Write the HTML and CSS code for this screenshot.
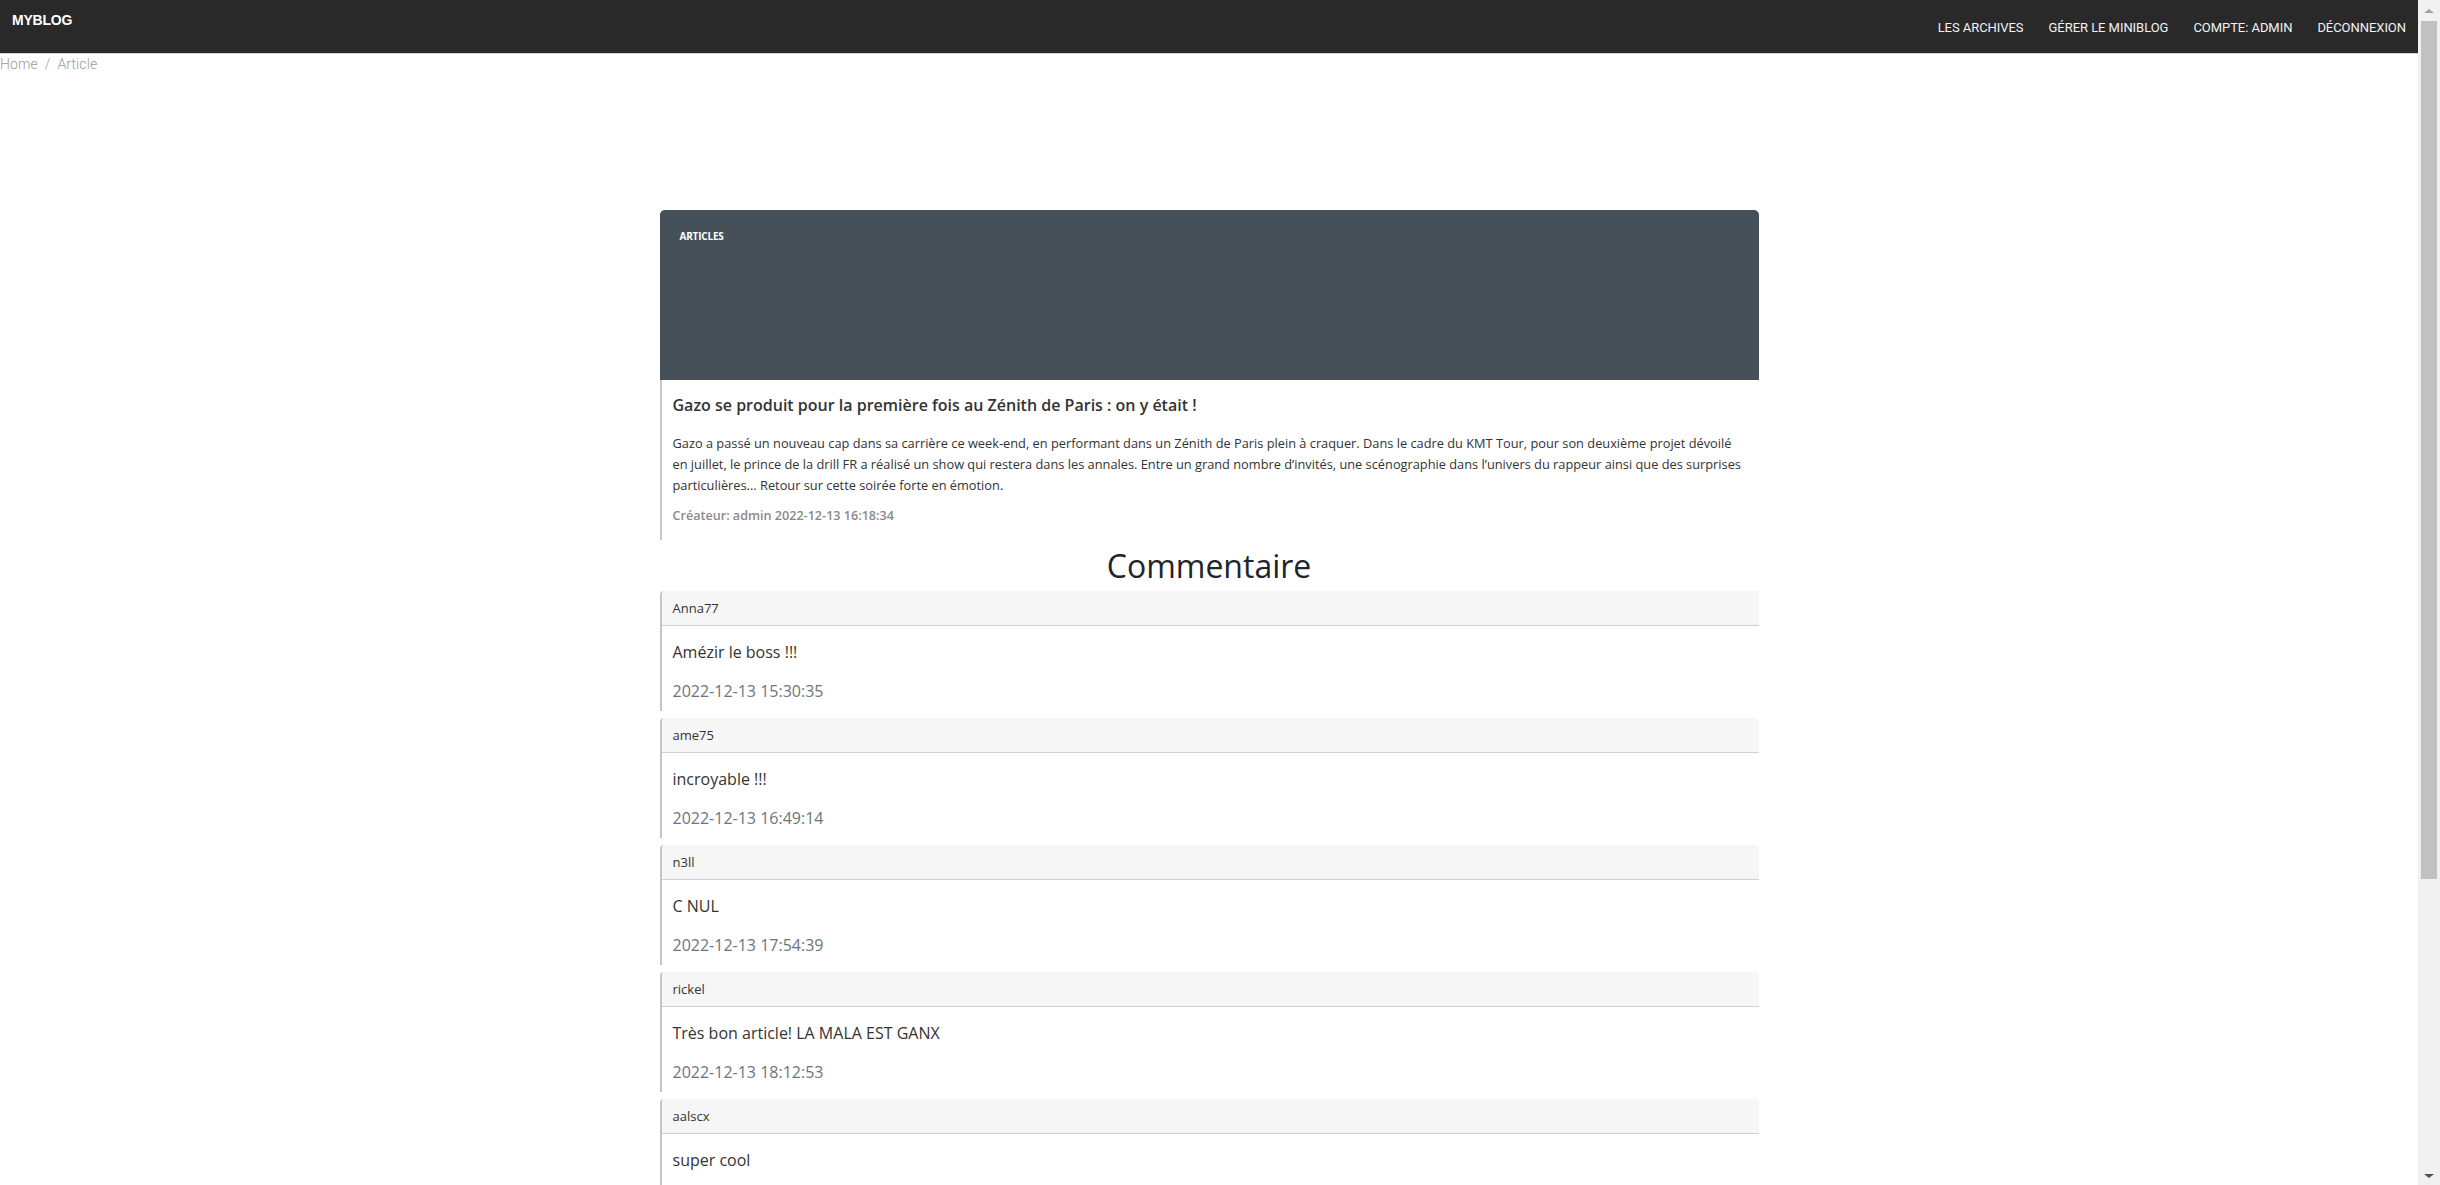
FILE: index.html
```html
<!DOCTYPE html>
<html lang="fr">
<head>
<meta charset="utf-8">
<title>MyBlog - Article</title>
<link rel="stylesheet" href="styles.css">
</head>
<body>
<div class="page">
  <nav class="topbar">
    <a class="brand" href="#">MYBLOG</a>
    <ul class="menu">
      <li><a href="#">LES ARCHIVES</a></li>
      <li><a href="#">GÉRER LE MINIBLOG</a></li>
      <li><a href="#">COMPTE: ADMIN</a></li>
      <li><a href="#">DÉCONNEXION</a></li>
    </ul>
  </nav>
  <div class="crumbs"><a href="#">Home</a><span class="sep">/</span><span class="here">Article</span></div>

  <main class="wrap">
    <article class="card">
      <header class="card-head"><span class="tag">ARTICLES</span></header>
      <div class="card-body">
        <h2 class="title">Gazo se produit pour la première fois au Zénith de Paris : on y était !</h2>
        <p class="text">Gazo a passé un nouveau cap dans sa carrière ce week-end, en performant dans un Zénith de Paris plein à craquer. Dans le cadre du KMT Tour, pour son deuxième projet dévoilé<br>en juillet, le prince de la drill FR a réalisé un show qui restera dans les annales. Entre un grand nombre d’invités, une scénographie dans l’univers du rappeur ainsi que des surprises particulières... Retour sur cette soirée forte en émotion.</p>
        <p class="meta">Créateur: admin 2022-12-13 16:18:34</p>
      </div>
    </article>

    <h1 class="section-title">Commentaire</h1>

    <section class="comments">
      <div class="comment">
        <div class="c-head">Anna77</div>
        <div class="c-body"><p class="c-text">Amézir le boss !!!</p><p class="c-date">2022-12-13 15:30:35</p></div>
      </div>
      <div class="comment">
        <div class="c-head">ame75</div>
        <div class="c-body"><p class="c-text">incroyable !!!</p><p class="c-date">2022-12-13 16:49:14</p></div>
      </div>
      <div class="comment">
        <div class="c-head">n3ll</div>
        <div class="c-body"><p class="c-text">C NUL</p><p class="c-date">2022-12-13 17:54:39</p></div>
      </div>
      <div class="comment">
        <div class="c-head">rickel</div>
        <div class="c-body"><p class="c-text">Très bon article! LA MALA EST GANX</p><p class="c-date">2022-12-13 18:12:53</p></div>
      </div>
      <div class="comment">
        <div class="c-head">aalscx</div>
        <div class="c-body"><p class="c-text">super cool</p><p class="c-date">2022-12-13 18:40:07</p></div>
      </div>
    </section>
  </main>
</div>
<div class="scrollbar" aria-hidden="true">
  <span class="sb-up"></span>
  <span class="sb-thumb"></span>
  <span class="sb-track"></span>
  <span class="sb-down"></span>
</div>
</body>
</html>
```
FILE: styles.css
```css
html, body { margin: 0; padding: 0; }
body {
  background: #fff;
  font-family: "Open Sans", "Noto Sans", sans-serif;
  color: #333;
  display: flex;
  align-items: flex-start;
}
a { text-decoration: none; color: inherit; }

.page { flex: 1; min-width: 0; }

/* scrollbar drawn as in the capture */
.scrollbar {
  flex: none;
  width: 22px;
  height: 100vh;
  position: sticky;
  top: 0;
  background: #f1f1f1;
  display: flex;
  flex-direction: column;
  align-items: center;
}
.sb-up {
  margin-top: 9px;
  width: 0; height: 0;
  border-left: 5px solid transparent;
  border-right: 5px solid transparent;
  border-bottom: 4px solid #a3a3a3;
}
.sb-thumb {
  margin-top: 8px;
  width: 16px;
  height: 858px;
  background: #c1c1c1;
}
.sb-track { flex: 1; }
.sb-down {
  margin-bottom: 7px;
  width: 0; height: 0;
  border-left: 5px solid transparent;
  border-right: 5px solid transparent;
  border-top: 4px solid #505050;
}

.topbar {
  height: 53px;
  background: #292929;
  border-bottom: 1px solid #d6d6d6;
  display: flex;
  align-items: center;
  justify-content: space-between;
  padding: 0 12px;
}
.brand {
  font-family: "Liberation Sans", Arial, sans-serif;
  font-weight: 900;
  font-size: 14px;
  line-height: 16px;
  color: #fff;
  letter-spacing: -0.2px;
  align-self: flex-start;
  margin-top: 12px;
}
.menu {
  list-style: none;
  margin: 0 0 2px;
  padding: 0;
  display: flex;
  gap: 25px;
  align-items: center;
}
.menu a {
  font-family: Roboto, "Liberation Sans", sans-serif;
  font-size: 13px;
  color: #f2f2f2;
  letter-spacing: -0.05px;
}

.crumbs {
  font-family: Roboto, "Liberation Sans", sans-serif;
  font-size: 14px;
  color: #9a9a9a;
  height: 20px;
  line-height: 20px;
  font-weight: 300;
  letter-spacing: 0.1px;
}
.crumbs .sep { margin: 0 7px; }

.wrap {
  width: 1099px;
  margin: 136px auto 0;
}

.card {
  border-left: 2px solid #c8c8c8;
  border-radius: 5px 5px 0 0;
}
.card-head {
  height: 170px;
  background: #465059;
  border-radius: 5px 5px 0 0;
  margin-left: -2px;
  padding: 20px 0 0 20px;
  box-sizing: border-box;
}
.tag {
  display: block;
  color: #fff;
  font-size: 10px;
  font-weight: 700;
  letter-spacing: -0.2px;
  line-height: 12px;
}
.card-body {
  padding: 14px 6px 14px 11px;
}
.title {
  margin: 0 0 17px;
  font-size: 16px;
  line-height: 22px;
  font-weight: 600;
  color: #333;
}
.text {
  margin: 0 0 10px;
  font-size: 12.8px;
  line-height: 21px;
  color: #333;
}
.meta {
  margin: 0;
  font-size: 12.6px;
  line-height: 20px;
  font-weight: 600;
  color: #8a8a8a;
}

.section-title {
  margin: 5px 0 5px;
  text-align: center;
  font-size: 32px;
  line-height: 41px;
  font-weight: 500;
  color: #212529;
}

.comment {
  border-left: 2px solid #c4c4c4;
  border-radius: 4px 4px 0 0;
  margin-bottom: 7px;
}
.c-head {
  background: #f6f6f6;
  border-bottom: 1px solid #d0d0d0;
  border-radius: 4px 4px 0 0;
  height: 34px;
  line-height: 34px;
  padding-left: 11px;
  font-size: 13px;
  color: #333;
}
.c-body {
  padding: 14px 11px 8px;
}
.c-text {
  margin: 0 0 15px;
  font-size: 16px;
  line-height: 24px;
  color: #333;
}
.c-date {
  margin: 0;
  font-size: 16px;
  line-height: 24px;
  color: #6c757d;
}
```
